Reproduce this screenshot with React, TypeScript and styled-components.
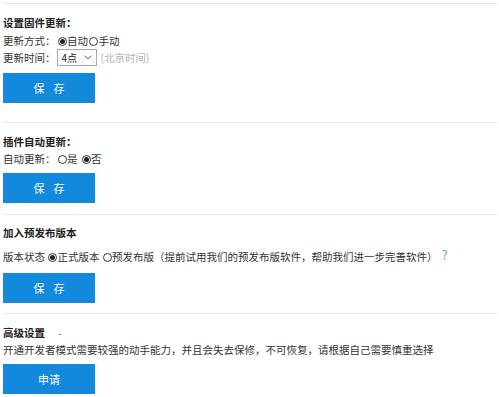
import React from "react";
import styled, { createGlobalStyle } from "styled-components";

const Global = createGlobalStyle`
  html, body { margin: 0; padding: 0; background: #fff; }
  body { font-family: "Noto Sans CJK SC", "Noto Sans", sans-serif; color: #333; }
`;

const Page = styled.div`
  padding: 3px 2px 0 3px;
  width: 494px;
  box-sizing: content-box;
`;

const Section = styled.section<{ $pt: number; $pb: number }>`
  border-top: 1px solid #e7e7e7;
  padding-top: ${(p) => p.$pt}px;
  padding-bottom: ${(p) => p.$pb}px;
  display: flex;
  flex-direction: column;
  align-items: flex-start;
`;

const Title = styled.div`
  font-size: 10.5px;
  line-height: 16px;
  font-weight: 700;
  color: #222;
  display: flex;
  align-items: center;
`;

const Row = styled.div<{ $mt: number; $h?: number }>`
  margin-top: ${(p) => p.$mt}px;
  height: ${(p) => p.$h ?? 16}px;
  font-size: 10.5px;
  line-height: 16px;
  color: #333;
  display: flex;
  align-items: center;
  white-space: nowrap;
`;

const Radio = styled.span<{ $checked?: boolean; $ml?: number }>`
  display: inline-flex;
  align-items: center;
  justify-content: center;
  width: 9px;
  height: 9px;
  border: 1px solid #333;
  border-radius: 50%;
  box-sizing: border-box;
  margin-left: ${(p) => p.$ml ?? 0}px;
  margin-right: 0.5px;
  &::after {
    content: "";
    display: ${(p) => (p.$checked ? "block" : "none")};
    width: 5px;
    height: 5px;
    border-radius: 50%;
    background: #222;
  }
`;

const Select = styled.div`
  width: 40px;
  height: 17px;
  box-sizing: border-box;
  border: 1px solid #a9a9a9;
  background: #fff;
  display: flex;
  align-items: center;
  justify-content: space-between;
  padding: 0 4px 0 4px;
  font-size: 10px;
  color: #222;
  margin-left: 1px;
`;

const Hint = styled.span`
  color: #b3b3b3;
  margin-left: 4px;
`;

const Help = styled.span`
  color: #5aaebc;
  font-size: 13px;
  margin-left: 4px;
  position: relative;
  top: -2px;
`;

const Dash = styled.span`
  color: #3a7fbf;
  margin-left: 13px;
  font-weight: 400;
`;

const Button = styled.button<{ $mt: number; $h?: number }>`
  margin-top: ${(p) => p.$mt}px;
  width: 92px;
  height: ${(p) => p.$h ?? 30}px;
  border: none;
  padding: 0;
  background: #1389dc;
  color: #fff;
  font-family: "Noto Sans CJK SC", "Noto Sans", sans-serif;
  font-size: 11px;
  display: flex;
  align-items: center;
  justify-content: center;
  gap: 9px;
`;

const Chevron = () => (
  <svg width="8" height="5" viewBox="0 0 8 5">
    <path d="M0.5 0.5 L4 4 L7.5 0.5" fill="none" stroke="#777" strokeWidth="1" />
  </svg>
);

export default function App() {
  return (
    <>
      <Global />
      <Page>
        <Section $pt={11} $pb={19}>
          <Title>设置固件更新：</Title>
          <Row $mt={2}>
            更新方式：<Radio $checked $ml={2} />自动<Radio $ml={1} />手动
          </Row>
          <Row $mt={0} $h={17}>
            更新时间：
            <Select>
              <span>4点</span>
              <Chevron />
            </Select>
            <Hint>(北京时间)</Hint>
          </Row>
          <Button $mt={7}>
            <span>保</span>
            <span>存</span>
          </Button>
        </Section>
        <Section $pt={11} $pb={11}>
          <Title>插件自动更新：</Title>
          <Row $mt={1}>
            自动更新：<Radio $ml={2} />是<Radio $checked $ml={4} />否
          </Row>
          <Button $mt={6}>
            <span>保</span>
            <span>存</span>
          </Button>
        </Section>
        <Section $pt={10} $pb={10}>
          <Title>加入预发布版本</Title>
          <Row $mt={8}>
            版本状态<Radio $checked $ml={3} />正式版本<Radio $ml={3} />
            预发布版（提前试用我们的预发布版软件，帮助我们进一步完善软件）
            <Help>?</Help>
          </Row>
          <Button $mt={8}>
            <span>保</span>
            <span>存</span>
          </Button>
        </Section>
        <Section $pt={11} $pb={0}>
          <Title>
            高级设置<Dash>-</Dash>
          </Title>
          <Row $mt={1}>
            开通开发者模式需要较强的动手能力，并且会失去保修，不可恢复，请根据自己需要慎重选择
          </Row>
          <Button $mt={6}>申请</Button>
        </Section>
      </Page>
    </>
  );
}
